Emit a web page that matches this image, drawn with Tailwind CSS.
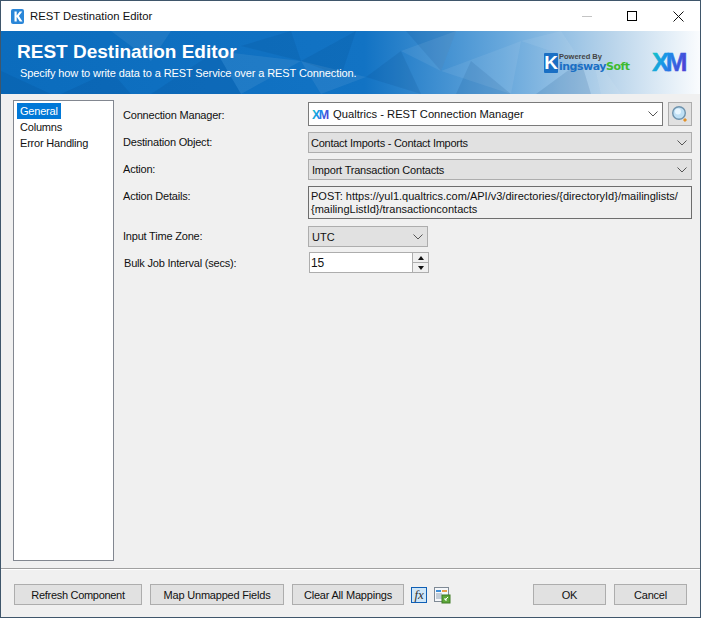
<!doctype html>
<html><head><meta charset="utf-8"><script src="https://cdn.jsdelivr.net/npm/@tailwindcss/browser@4"></script></head>
<body class="bg-[#f0f0f0]">
<div class="w-[701px] h-[618px] flex flex-col overflow-hidden bg-[#f0f0f0] border border-[#3f566b] font-['Liberation_Sans',sans-serif] text-[11px] leading-[16px] tracking-[-0.2px] text-[#111]">
  <svg class="absolute w-0 h-0"><defs><linearGradient id="xm" x1="0" y1="0" x2="1" y2="0.35"><stop offset="0" stop-color="#14d0c0"/><stop offset=".5" stop-color="#1a90ea"/><stop offset="1" stop-color="#4a45d8"/></linearGradient></defs></svg>
  <div class="h-[30px] shrink-0 bg-white flex items-center">
    <svg class="ml-[10px] w-[13px] h-[15px]" viewBox="0 0 13 15"><rect width="13" height="15" rx="2" fill="#2a86d8"/><path d="M3.5 2.5h2.2v4l3-4h2.6l-3.4 4.6 3.6 5.4H8.8l-3.1-4.7v4.7H3.5z" fill="#fff"/></svg>
    <span class="ml-[6px] text-[11.3px] tracking-normal">REST Destination Editor</span>
    <div class="ml-auto flex items-center">
      <div class="w-[10px] h-px bg-[#c4c4c4] mr-[35px]"></div>
      <div class="w-[10px] h-[10px] border border-black mr-[36px]"></div>
      <svg class="w-[11px] h-[11px] mr-[16px]" viewBox="0 0 11 11"><path d="M.5.5l10 10M10.5.5l-10 10" stroke="#111" fill="none"/></svg>
    </div>
  </div>
  <div class="relative h-[63px] shrink-0 overflow-hidden bg-[#0b6cbd]">
    <svg class="absolute inset-0" width="699" height="63" viewBox="0 0 699 63">
      <defs><linearGradient id="b" x1="0" x2="1" y1="0" y2="0"><stop offset="0" stop-color="#0b6cbd"/><stop offset=".52" stop-color="#1273c4"/><stop offset=".72" stop-color="#68a8dc"/><stop offset=".87" stop-color="#b7d3ea"/><stop offset="1" stop-color="#fafcfe"/></linearGradient></defs>
      <rect width="699" height="63" fill="url(#b)"/>
      <g fill="#003a78" fill-opacity=".13">
        <polygon points="150,63 215,20 240,63"/><polygon points="300,30 355,0 340,45"/><polygon points="365,46 400,20 420,63"/>
        <polygon points="60,63 110,40 130,63"/><polygon points="240,15 290,0 300,30"/><polygon points="0,40 50,63 0,63"/>
        <polygon points="470,30 510,63 455,63"/><polygon points="405,0 440,40 455,0"/><polygon points="535,63 580,30 590,63"/>
      </g>
      <g fill="#fff" fill-opacity=".07">
        <polygon points="400,20 455,0 440,40"/><polygon points="440,40 520,10 510,63"/><polygon points="215,20 300,30 240,63"/>
        <polygon points="300,30 365,46 320,63"/><polygon points="520,10 560,0 580,30"/><polygon points="110,0 170,0 150,30"/><polygon points="590,20 620,63 600,63"/>
      </g>
    </svg>
    <div class="relative pl-[16px] pt-[10px]">
      <div class="font-bold text-[19px] leading-[22px] tracking-normal text-white">REST Destination Editor</div>
      <div class="ml-[3px] mt-[2px] text-white text-[11px] tracking-[-0.1px] leading-[16px]">Specify how to write data to a REST Service over a REST Connection.</div>
    </div>
    <div class="absolute left-[543px] top-[22px] w-[14px] h-[20px] bg-[#1a6fc4] flex items-center justify-center rounded-[1px]"><span class="font-bold text-white text-[19px] leading-[20px]">K</span></div>
    <div class="absolute left-[558px] top-[21px] font-bold text-[7.5px] leading-[9px] tracking-normal text-[#444]">Powered By</div>
    <div class="absolute left-[558px] top-[29px] font-['DejaVu_Sans',sans-serif] font-bold text-[11px] leading-[14px] tracking-[-0.5px] text-[#1a6fc4]">ingsway<span class="text-[#3dbb2f]">Soft</span></div>
    <svg class="absolute left-[650px] top-[18px]" width="44" height="28" viewBox="0 0 44 28"><text x="1" y="22" font-family="Liberation Sans" font-weight="700" font-size="26" letter-spacing="-3.5" fill="url(#xm)" stroke="url(#xm)" stroke-width=".5">XM</text></svg>
  </div>
  <div class="flex-1 flex pl-[12px] pt-[6px] pr-[8px] min-h-0">
    <div class="w-[101px] h-[461px] shrink-0 bg-white border border-[#828790] pl-[3px] pt-[2px]">
      <div class="w-[44px] h-[16px] bg-[#0078d7] text-white pl-[3px]">General</div>
      <div class="pl-[3px]">Columns</div>
      <div class="pl-[3px]">Error Handling</div>
    </div>
    <div class="ml-[9px] flex-1 pt-[2px]">
      <div class="flex h-[24px]"><label class="w-[185px] pt-[5px]">Connection Manager:</label>
        <div class="w-[355px] bg-white border border-[#7a7a7a] flex items-center pl-[3px] pr-[4px]"><svg class="w-[21px] h-[14px] shrink-0" viewBox="0 0 21 14"><text x="0" y="11.5" font-family="Liberation Sans" font-weight="700" font-size="12.5" letter-spacing="-1.6" fill="url(#xm)">XM</text></svg><span class="text-[11.2px] tracking-normal">Qualtrics - REST Connection Manager</span><svg class="ml-auto w-[10px] h-[6px]" viewBox="0 0 10 6"><path d="M.5.5L5 5 9.5.5" stroke="#555" fill="none"/></svg></div>
        <div class="ml-[5px] w-[24px] h-[24px] bg-[#e1e1e1] border border-[#adadad] flex items-center justify-center"><svg class="w-[18px] h-[18px]" viewBox="0 0 18 18"><circle cx="8" cy="8" r="6.3" fill="#bfe0f5" stroke="#6f93ad" stroke-width="1.4"/><circle cx="7" cy="6.5" r="3" fill="#e8f6ff"/><path d="M13 14l2 2" stroke="#e0912a" stroke-width="3"/></svg></div>
      </div>
      <div class="flex h-[21px] mt-[6px]"><label class="w-[185px] pt-[2px]">Destination Object:</label>
        <div class="w-[384px] bg-[#e1e1e1] border border-[#adadad] flex items-center pl-[2px] pr-[4px]"><span class="tracking-[-0.25px]">Contact Imports - Contact Imports</span><svg class="ml-auto w-[10px] h-[6px]" viewBox="0 0 10 6"><path d="M.5.5L5 5 9.5.5" stroke="#555" fill="none"/></svg></div>
      </div>
      <div class="flex h-[21px] mt-[6px]"><label class="w-[185px] pt-[2px]">Action:</label>
        <div class="w-[384px] bg-[#e1e1e1] border border-[#adadad] flex items-center pl-[3px] pr-[4px]"><span>Import Transaction Contacts</span><svg class="ml-auto w-[10px] h-[6px]" viewBox="0 0 10 6"><path d="M.5.5L5 5 9.5.5" stroke="#555" fill="none"/></svg></div>
      </div>
      <div class="flex h-[33px] mt-[6px]"><label class="w-[185px] pt-[2px]">Action Details:</label>
        <div class="w-[384px] bg-[#f0f0f0] border border-[#6e6e6e] pl-[2px] pt-[3px] leading-[13px] tracking-normal whitespace-nowrap">POST: https://yul1.qualtrics.com/API/v3/directories/{directoryId}/mailinglists/<br>{mailingListId}/transactioncontacts</div>
      </div>
      <div class="flex h-[21px] mt-[7px]"><label class="w-[185px] pt-[2px]">Input Time Zone:</label>
        <div class="w-[120px] bg-[#e1e1e1] border border-[#adadad] flex items-center pl-[3px] pr-[4px]"><span class="tracking-normal">UTC</span><svg class="ml-auto w-[10px] h-[6px]" viewBox="0 0 10 6"><path d="M.5.5L5 5 9.5.5" stroke="#555" fill="none"/></svg></div>
      </div>
      <div class="flex h-[21px] mt-[5px]"><label class="w-[186px] pl-[1px] pt-[3px]">Bulk Job Interval (secs):</label>
        <div class="w-[120px] bg-white border border-[#adadad] flex items-center pl-[1px]"><span class="text-[12px]">15</span>
          <div class="ml-auto h-full w-[16px] border-l border-[#adadad] flex flex-col">
            <div class="flex-1 bg-[#f0f0f0] border-b border-[#adadad] flex items-center justify-center"><div class="w-0 h-0 border-x-[3px] border-x-transparent border-b-[4px] border-b-[#111]"></div></div>
            <div class="flex-1 bg-[#f0f0f0] flex items-center justify-center"><div class="w-0 h-0 border-x-[3px] border-x-transparent border-t-[4px] border-t-[#111]"></div></div>
          </div>
        </div>
      </div>
    </div>
  </div>
  <div class="h-[49px] shrink-0 border-t border-[#a0a0a0] shadow-[inset_0_1px_0_#fff] flex items-start pl-[13px] pt-[15px]">
    <button class="w-[128px] h-[21px] bg-[#e1e1e1] border border-[#adadad] tracking-[-0.3px]">Refresh Component</button>
    <button class="ml-[8px] w-[134px] h-[21px] bg-[#e1e1e1] border border-[#adadad]">Map Unmapped Fields</button>
    <button class="ml-[8px] w-[112px] h-[21px] bg-[#e1e1e1] border border-[#adadad]">Clear All Mappings</button>
    <svg class="ml-[7px] mt-[3px] w-[16px] h-[16px]" viewBox="0 0 16 16"><rect x=".5" y=".5" width="15" height="15" fill="#cfe6f7" stroke="#0f5fb5"/><text x="8" y="12" text-anchor="middle" font-family="Liberation Serif" font-style="italic" font-size="13" fill="#333">fx</text></svg>
    <svg class="ml-[7px] mt-[3px] w-[17px] h-[17px]" viewBox="0 0 17 17"><rect x=".5" y=".5" width="14" height="14" fill="#f5f7fa" stroke="#7f8a95"/><rect x="2" y="3" width="5" height="2" fill="#3f8fd8"/><rect x="8" y="3" width="5" height="2" fill="#e8a04a"/><path d="M2 7h6M2 9h6M2 11h6" stroke="#8fa2b5"/><rect x="8" y="8" width="8" height="8" fill="#5ea83a" stroke="#3f7a25"/><path d="M14 10l-3 3M11 11v2h2" stroke="#fff" fill="none"/></svg>
    <button class="ml-[82px] w-[73px] h-[21px] bg-[#e1e1e1] border border-[#adadad]">OK</button>
    <button class="ml-[8px] w-[73px] h-[21px] bg-[#e1e1e1] border border-[#adadad]">Cancel</button>
  </div>
</div>
</body></html>
